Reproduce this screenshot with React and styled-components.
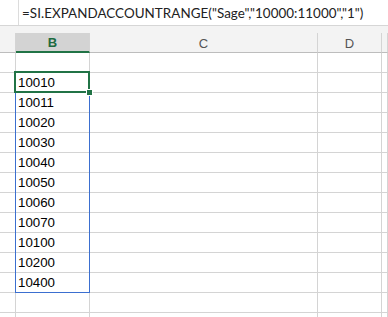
import React from 'react'
import styled, { createGlobalStyle } from 'styled-components';

const columns = [
  { key: 'A', width: 16 },
  { key: 'B', width: 74, label: 'B', active: true },
  { key: 'C', width: 228, label: 'C' },
  { key: 'D', width: 64, label: 'D' },
  { key: 'E', width: 6 },
];

const values = ['', '10010', '10011', '10020', '10030', '10040', '10050', '10060', '10070', '10100', '10200', '10400', '', ''];

const App = () => {
  return (
    <>
      <GlobalStyle />
      <Sheet>
        <FormulaBar>
          <NameStub />
          <FormulaText>=SI.EXPANDACCOUNTRANGE("Sage","10000:11000","1")</FormulaText>
        </FormulaBar>
        <Gap />
        <HeaderRow>
          {columns.map(col => (
            <HeaderCell key={col.key} $w={col.width} $active={col.active}>
              {col.label}
            </HeaderCell>
          ))}
        </HeaderRow>
        <Grid>
          {values.map((v, i) => (
            <Row key={i}>
              {columns.map(col => (
                <Cell key={col.key} $w={col.width}>
                  {col.key === 'B' ? v : ''}
                </Cell>
              ))}
            </Row>
          ))}
          <RangeBox />
          <ActiveCell />
          <FillHandle />
        </Grid>
      </Sheet>
    </>
  )
}

const GlobalStyle = createGlobalStyle`
  html, body {
    margin: 0;
    padding: 0;
    background: #ffffff;
    overflow: hidden;
  }
  * {
    box-sizing: border-box;
  }
`

const Sheet = styled.div`
  width: 388px;
  height: 317px;
  overflow: hidden;
  background: #ffffff;
  font-family: "Liberation Sans", Arial, sans-serif;
`

const FormulaBar = styled.div`
  display: flex;
  height: 26px;
  background: #ffffff;
  border-bottom: 1px solid #d6d6d6;
`

const NameStub = styled.div`
  width: 19px;
  border-right: 1px solid #dcdcdc;
`

const FormulaText = styled.div`
  display: flex;
  align-items: center;
  padding-left: 3px;
  font-family: Lato, "Liberation Sans", sans-serif;
  font-size: 13.4px;
  letter-spacing: 0.05px;
  color: #222222;
  white-space: nowrap;
`

const Gap = styled.div`
  height: 7px;
  background: #f3f3f3;
`

const HeaderRow = styled.div`
  display: flex;
  height: 20px;
  background: #f3f3f3;
`

const HeaderCell = styled.div`
  flex: 0 0 ${p => p.$w}px;
  display: flex;
  align-items: center;
  justify-content: center;
  border-right: 1px solid #d4d4d4;
  border-bottom: ${p => (p.$active ? '2px solid #217346' : '1px solid #bdbdbd')};
  background: ${p => (p.$active ? '#d3d3d3' : 'transparent')};
  color: ${p => (p.$active ? '#1d6b40' : '#555555')};
  font-weight: ${p => (p.$active ? 700 : 400)};
  font-size: 13px;
  padding-top: 1px;
`

const Grid = styled.div`
  position: relative;
`

const Row = styled.div`
  display: flex;
  height: 20px;
`

const Cell = styled.div`
  flex: 0 0 ${p => p.$w}px;
  display: flex;
  align-items: center;
  padding-left: 2px;
  border-right: 1px solid #d4d4d4;
  border-bottom: 1px solid #d4d4d4;
  font-size: 13.3px;
  color: #000000;
`

const RangeBox = styled.div`
  position: absolute;
  left: 15px;
  top: 19px;
  width: 75px;
  height: 221px;
  border: 1px solid #3b6fd0;
`

const ActiveCell = styled.div`
  position: absolute;
  left: 14px;
  top: 18px;
  width: 76px;
  height: 22px;
  border: 2px solid #217346;
`

const FillHandle = styled.div`
  position: absolute;
  left: 86px;
  top: 36px;
  width: 7px;
  height: 7px;
  background: #217346;
  border: 1px solid #ffffff;
`

export default App;
